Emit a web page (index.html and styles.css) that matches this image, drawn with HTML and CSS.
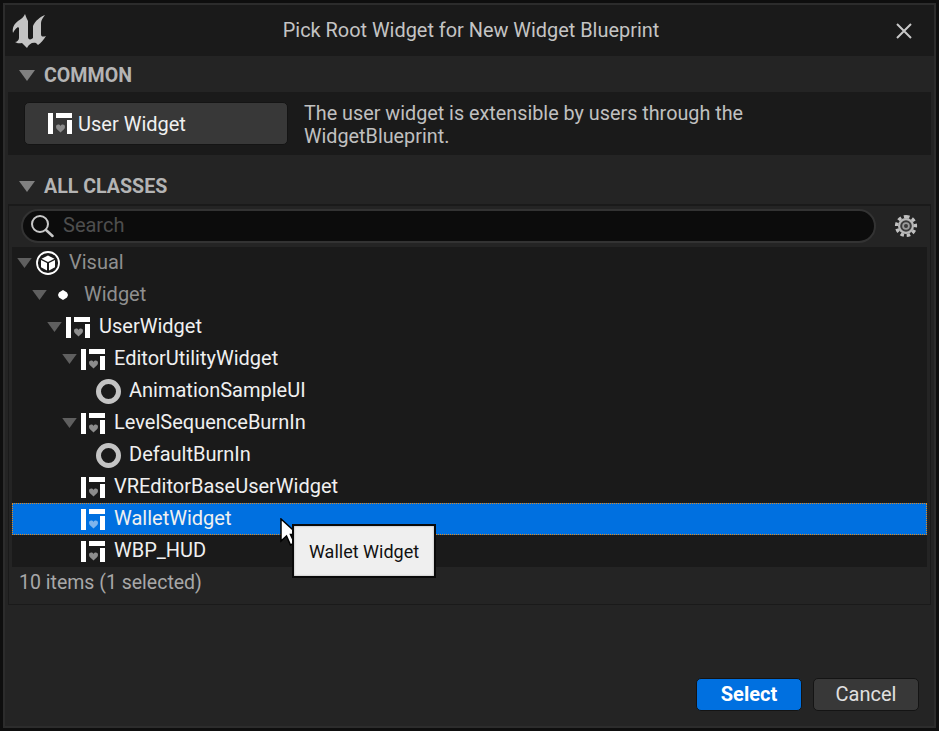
FILE: index.html
```html
<!DOCTYPE html>
<html lang="en">
<head>
    <meta charset="UTF-8">
    <meta name="viewport" content="width=device-width, initial-scale=1.0">
    <title>Pick Root Widget for New Widget Blueprint</title>
    <link rel="stylesheet" href="styles.css">
</head>
<body>
    <svg width="0" height="0" class="defs">
        <symbol id="widget" viewBox="0 0 24 21">
            <path fill="#fff" d="M0 0h5v21H0zM8 0h16v5H8zM19 7h5v14h-5z"/>
            <path fill="var(--heart, #8c8c8c)" d="M8 14c0-3 3.500-3 4.500-1 1-2 4.500-2 4.500 1 0 2-2.500 3.500-4.500 5.500-2-2-4.500-3.500-4.500-5.500z"/>
        </symbol>
        <symbol id="arrow" viewBox="0 0 16 11">
            <path fill="currentColor" d="M0 0h16L8 11z"/>
        </symbol>
    </svg>

    <div class="window">
        <header class="titlebar">
            <svg class="logo" viewBox="10 11 36 36">
                <path fill="#c4c4c4" d="M25 12C24 15 21 17 18 19C14 22 12 26 13 31C14 29 15 27 18 25L19 26V36C19 38 17 40 15 40C18 42 20 41 22 41L27 46C29 42 32 40 36 41L38 43C41 41 44 37 46 34C43 35 41 35 41 32V21C41 18 43 16 45 13C40 15 35 19 33 24V36C31 38 28 38 28 35V19C27 17 26 15 25 12Z"/>
            </svg>
            <span class="title">Pick Root Widget for New Widget Blueprint</span>
            <svg class="close" viewBox="0 0 16 16">
                <path stroke="#c8c8c8" stroke-width="2" fill="none" d="M1 1l14 14M15 1L1 15"/>
            </svg>
        </header>

        <main class="content">
            <div class="section-head first">
                <svg class="sec-arrow"><use href="#arrow"/></svg>COMMON
            </div>
            <div class="common">
                <button class="user-btn">
                    <svg class="icon"><use href="#widget"/></svg>User Widget
                </button>
                <p class="desc">The user widget is extensible by users through the WidgetBlueprint.</p>
            </div>

            <div class="section-head">
                <svg class="sec-arrow"><use href="#arrow"/></svg>ALL CLASSES
            </div>
            <div class="classes">
                <div class="search-row">
                    <div class="search">
                        <svg class="search-icon" viewBox="0 0 24 24">
                            <circle cx="10" cy="10" r="8" fill="none" stroke="#c8c8c8" stroke-width="2"/>
                            <path stroke="#c8c8c8" stroke-width="2.500" stroke-linecap="round" d="M16 16l6.500 6"/>
                        </svg>
                        <span class="search-text">Search</span>
                    </div>
                    <svg class="gear" viewBox="0 0 24 24">
                        <path fill="none" stroke="#c0c0c0" stroke-width="3.400" stroke-dasharray="3.500 2.780" d="M12 2.600a9.400 9.400 0 1 1 0 18.800a9.400 9.400 0 1 1 0-18.800"/>
                        <circle cx="12" cy="12" r="8" fill="#b8b8b8"/>
                        <circle cx="12" cy="12" r="5.800" fill="#3a3a3a"/>
                        <circle cx="12" cy="12" r="3.800" fill="#9a9a9a"/>
                        <circle cx="12" cy="12" r="2" fill="#3a3a3a"/>
                    </svg>
                </div>

                <div class="tree">
                    <div class="row lvl0 dim">
                        <svg class="arrow"><use href="#arrow"/></svg>
                        <svg class="cube" viewBox="0 0 24 24">
                            <circle cx="12" cy="12" r="11" fill="none" stroke="#fff" stroke-width="1.800"/>
                            <path fill="#fff" d="M12 4.500l6.500 3.200-6.500 3.300-6.500-3.300zM5 9l6 3v7.500l-6-3.200zM19 9l-6 3v7.500l6-3.200z"/>
                        </svg>
                        <span class="label">Visual</span>
                    </div>
                    <div class="row lvl1 dim">
                        <svg class="arrow"><use href="#arrow"/></svg>
                        <span class="slot"><i class="dot"></i></span>
                        <span class="label">Widget</span>
                    </div>
                    <div class="row lvl2">
                        <svg class="arrow"><use href="#arrow"/></svg>
                        <svg class="icon"><use href="#widget"/></svg>
                        <span class="label">UserWidget</span>
                    </div>
                    <div class="row lvl3">
                        <svg class="arrow"><use href="#arrow"/></svg>
                        <svg class="icon"><use href="#widget"/></svg>
                        <span class="label">EditorUtilityWidget</span>
                    </div>
                    <div class="row lvl4">
                        <i class="ring"></i>
                        <span class="label">AnimationSampleUI</span>
                    </div>
                    <div class="row lvl3">
                        <svg class="arrow"><use href="#arrow"/></svg>
                        <svg class="icon"><use href="#widget"/></svg>
                        <span class="label">LevelSequenceBurnIn</span>
                    </div>
                    <div class="row lvl4">
                        <i class="ring"></i>
                        <span class="label">DefaultBurnIn</span>
                    </div>
                    <div class="row lvl3">
                        <span class="no-arrow"></span>
                        <svg class="icon"><use href="#widget"/></svg>
                        <span class="label">VREditorBaseUserWidget</span>
                    </div>
                    <div class="row lvl3 selected">
                        <span class="no-arrow"></span>
                        <svg class="icon"><use href="#widget"/></svg>
                        <span class="label">WalletWidget</span>
                    </div>
                    <div class="row lvl3">
                        <span class="no-arrow"></span>
                        <svg class="icon"><use href="#widget"/></svg>
                        <span class="label">WBP_HUD</span>
                    </div>
                </div>
                <div class="count">10 items (1 selected)</div>
            </div>

            <div class="actions">
                <button class="btn primary">Select</button>
                <button class="btn">Cancel</button>
            </div>
        </main>
    </div>

    <svg class="cursor" viewBox="0 0 22 30">
        <path fill="#fff" stroke="#000" stroke-width="1.500" d="M1 1v22l5.500-5 4 9 4-2-4-8.500H18z"/>
    </svg>
    <div class="tooltip">Wallet Widget</div>
</body>
</html>
```

FILE: styles.css
```css
* {
    box-sizing: border-box;
}
body {
    margin: 0;
    width: 939px;
    height: 731px;
    overflow: hidden;
    background-color: #0e0e0e;
    padding: 3px;
    font-family: Roboto, "Liberation Sans", sans-serif;
    font-size: 20px;
    color: #f0f0f0;
}
.defs {
    position: absolute;
}
.window {
    height: 725px;
    border: 2px solid #2c2c2c;
    background: #242424;
    display: flex;
    flex-direction: column;
}
.titlebar {
    height: 51px;
    flex: none;
    background: #1a1a1a;
    display: flex;
    align-items: center;
    justify-content: space-between;
    padding: 0 22px 0 5px;
}
.logo {
    width: 36px;
    height: 36px;
}
.title {
    font-size: 19.900px;
    color: #c4c4c4;
}
.close {
    width: 16px;
    height: 16px;
}
.content {
    flex: 1;
    display: flex;
    flex-direction: column;
    padding: 0 3px;
}
.section-head {
    height: 36px;
    flex: none;
    display: flex;
    align-items: center;
    font-size: 19.600px;
    font-weight: 700;
    color: #b4b4b4;
    padding-left: 11px;
    margin-top: 13px;
}
.section-head.first {
    margin-top: 0;
    padding-top: 2px;
}
.sec-arrow {
    width: 16px;
    height: 11px;
    margin-right: 9px;
    color: #808080;
}
.common {
    height: 63px;
    flex: none;
    background: #1a1a1a;
    display: flex;
    align-items: center;
    padding-left: 16px;
}
.user-btn {
    width: 264px;
    height: 43px;
    flex: none;
    background: #383838;
    border: 1px solid #141414;
    border-radius: 5px;
    color: #f0f0f0;
    font: inherit;
    display: flex;
    align-items: center;
    padding: 0 0 0 23px;
}
.user-btn .icon {
    margin-right: 6px;
}
.desc {
    margin: 3px 0 0 16px;
    width: 520px;
    font-size: 19.800px;
    color: #c0c0c0;
    line-height: 23px;
}
.classes {
    height: 401px;
    flex: none;
    background: #242424;
    border: 1px solid #1a1a1a;
    border-top-width: 2px;
    display: flex;
    flex-direction: column;
    padding: 0 3px;
}
.search-row {
    height: 41px;
    flex: none;
    display: flex;
    align-items: center;
    padding: 0 0 2px 9px;
}
.search {
    width: 855px;
    height: 34px;
    border-radius: 17px;
    background: #0c0c0c;
    border: 2px solid #333;
    display: flex;
    align-items: center;
    padding-left: 7px;
    color: #4e4e4e;
}
.search-text {
    padding-bottom: 2px;
}
.search-icon {
    width: 24px;
    height: 24px;
    margin-right: 9px;
}
.gear {
    width: 24px;
    height: 24px;
    margin-left: 18px;
}
.tree {
    height: 320px;
    flex: none;
    background: #1a1a1a;
}
.row {
    height: 32px;
    display: flex;
    align-items: center;
    white-space: nowrap;
}
.lvl0 { padding-left: 5px; }
.lvl1 { padding-left: 20px; }
.lvl2 { padding-left: 35px; }
.lvl3 { padding-left: 50px; }
.lvl4 { padding-left: 84px; }
.lvl4 .label { margin-left: 8px; }
.arrow {
    width: 15px;
    height: 10px;
    margin-right: 4px;
    flex: none;
    color: #5f5f5f;
}
.no-arrow {
    width: 19px;
    flex: none;
}
.icon {
    width: 24px;
    height: 21px;
    flex: none;
}
.label {
    margin-left: 9px;
    padding-bottom: 2px;
}
.dim .label {
    color: #8f8f8f;
}
.cube {
    width: 24px;
    height: 24px;
    flex: none;
}
.slot {
    width: 24px;
    display: flex;
    justify-content: center;
}
.dot {
    width: 10px;
    height: 10px;
    background: #fff;
    clip-path: polygon(50% 0, 90% 25%, 100% 50%, 90% 75%, 50% 100%, 10% 75%, 0 50%, 10% 25%);
}
.ring {
    width: 25px;
    height: 25px;
    border-radius: 50%;
    border: 5px solid #c4c4c4;
    filter: blur(0.6px);
    flex: none;
}
.selected {
    background: #0070e0;
    outline: 1px dotted #e08a1e;
    outline-offset: -1px;
    --heart: #7fb4ec;
}
.count {
    height: 33px;
    flex: none;
    display: flex;
    align-items: center;
    color: #a8a8a8;
    font-size: 19.500px;
    padding: 0 0 2px 7px;
}
.actions {
    display: flex;
    justify-content: flex-end;
    gap: 11px;
    margin-top: 73px;
    padding-right: 12px;
}
.btn {
    width: 106px;
    height: 33px;
    border-radius: 5px;
    background: #383838;
    border: 1px solid #141414;
    color: #e0e0e0;
    font: inherit;
    padding: 0 0 2px;
}
.primary {
    background: #0070e0;
    color: #fff;
    font-weight: 700;
}
.cursor {
    position: absolute;
    left: 280px;
    top: 518px;
    width: 22px;
    height: 30px;
}
.tooltip {
    position: absolute;
    left: 292px;
    top: 524px;
    width: 144px;
    height: 54px;
    background: #efefef;
    border: 2px solid #0a0a0a;
    box-shadow: inset 0 0 2px #999;
    color: #111;
    font-size: 18px;
    display: flex;
    align-items: center;
    justify-content: center;
}
```
